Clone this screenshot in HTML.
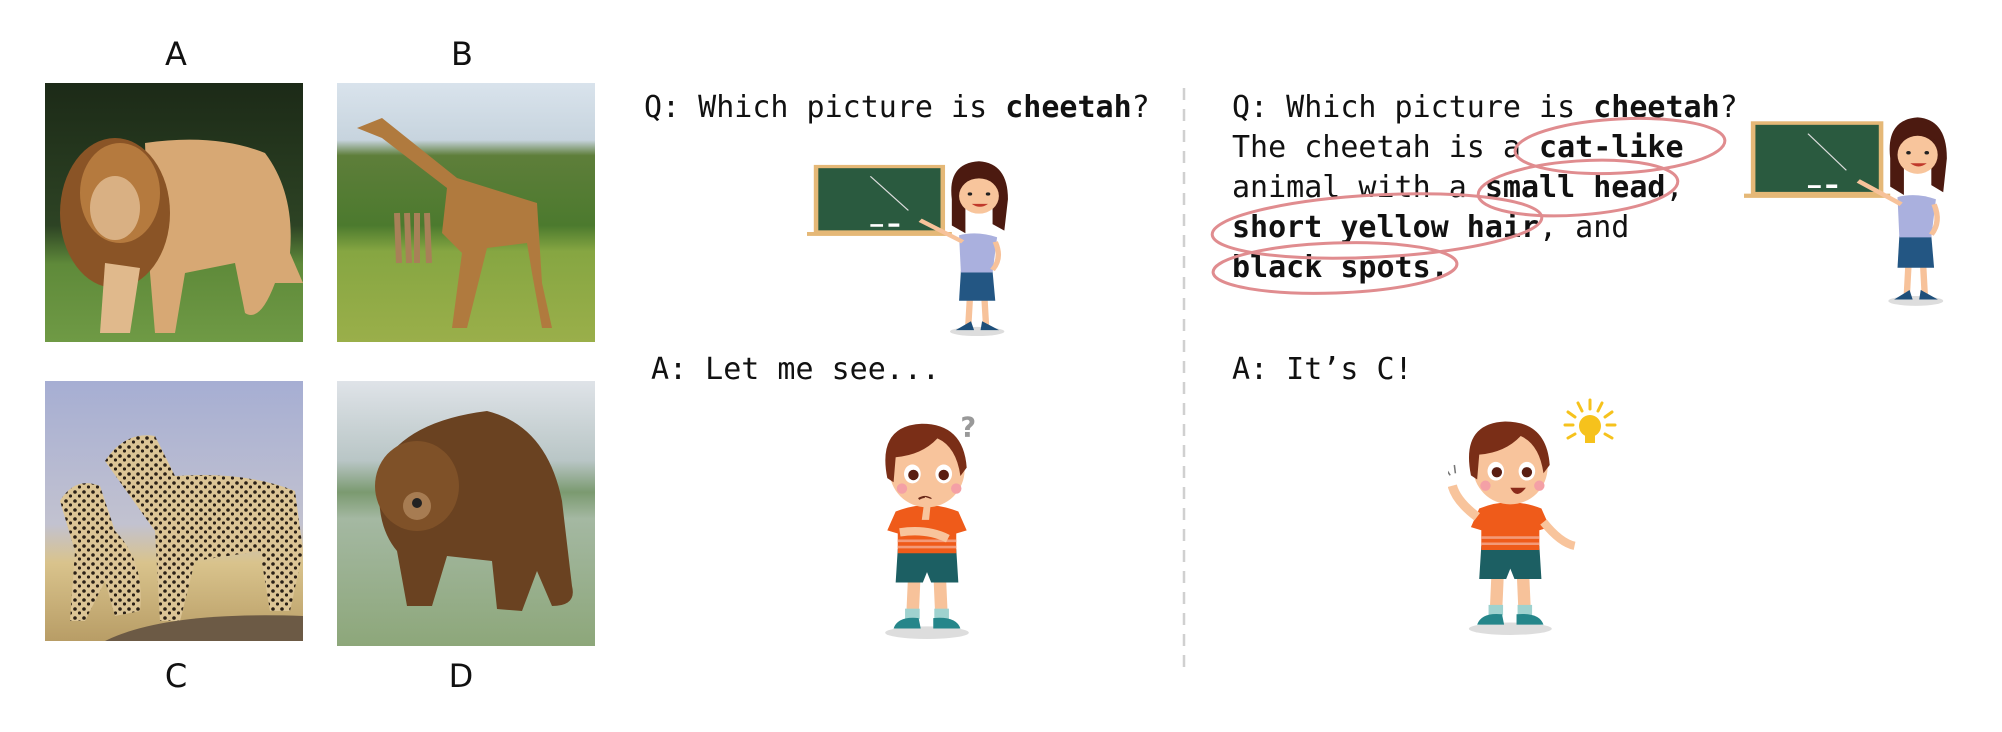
<!DOCTYPE html>
<html><head><meta charset="utf-8"><style>
body{margin:0;width:2002px;height:732px;background:#fff;position:relative;overflow:hidden;font-family:"DejaVu Sans Mono","Liberation Mono",monospace;color:#111}
.lbl{position:absolute;font-family:"DejaVu Sans","Liberation Sans",sans-serif;font-size:32px;width:60px;text-align:center;transform:translateX(-30px);line-height:1}
.t{position:absolute;font-size:30px;line-height:40px;white-space:pre}
b{font-weight:bold}
svg{position:absolute}
</style></head><body>
<div class="lbl" style="left:176px;top:38px">A</div>
<div class="lbl" style="left:462px;top:38px">B</div>
<div class="lbl" style="left:176px;top:660px">C</div>
<div class="lbl" style="left:461px;top:660px">D</div>

<!-- Lion -->
<svg style="left:45px;top:83px" width="258" height="259" viewBox="0 0 258 259">
<defs><linearGradient id="lg" x1="0" y1="0" x2="0" y2="1"><stop offset="0" stop-color="#1c2a17"/><stop offset=".55" stop-color="#2d4324"/><stop offset=".7" stop-color="#5f8a3a"/><stop offset="1" stop-color="#6f9a45"/></linearGradient></defs>
<rect width="258" height="259" fill="url(#lg)"/>
<path d="M100 60 Q170 50 220 70 Q250 110 245 170 L258 200 L230 200 Q215 240 200 230 L190 180 L140 190 L130 250 L110 250 L105 190 Z" fill="#d7a874"/>
<ellipse cx="70" cy="130" rx="55" ry="75" fill="#8a5426"/>
<ellipse cx="75" cy="110" rx="40" ry="50" fill="#b57a3e"/>
<ellipse cx="70" cy="125" rx="25" ry="32" fill="#d9b083"/>
<path d="M60 180 L55 250 L85 250 L95 185Z" fill="#e0b98c"/>
</svg>
<!-- Giraffe -->
<svg style="left:337px;top:83px" width="258" height="259" viewBox="0 0 258 259">
<defs><linearGradient id="gg" x1="0" y1="0" x2="0" y2="1"><stop offset="0" stop-color="#d9e3ec"/><stop offset=".22" stop-color="#c7d4de"/><stop offset=".28" stop-color="#5e7e3a"/><stop offset=".55" stop-color="#4c7a2e"/><stop offset=".65" stop-color="#86a642"/><stop offset="1" stop-color="#9aaf4a"/></linearGradient></defs>
<rect width="258" height="259" fill="url(#gg)"/>
<path d="M20 45 L45 35 L120 95 L200 120 L205 200 L215 245 L205 245 L195 190 L190 160 L150 165 L130 245 L115 245 L125 170 L105 150 L110 105 L45 55 Z" fill="#b07a3e"/>
<path d="M60 130 L62 180 M70 130 L72 180 M80 130 L80 180 M90 130 L92 180" stroke="#a88058" stroke-width="6"/>
</svg>
<!-- Cheetah -->
<svg style="left:45px;top:381px" width="258" height="260" viewBox="0 0 258 260">
<defs><linearGradient id="cg" x1="0" y1="0" x2="0" y2="1"><stop offset="0" stop-color="#a6aed3"/><stop offset=".55" stop-color="#c2c2d0"/><stop offset=".7" stop-color="#d9c38c"/><stop offset="1" stop-color="#b89d66"/></linearGradient>
<pattern id="sp" width="9" height="9" patternUnits="userSpaceOnUse"><rect width="9" height="9" fill="#dcc596"/><circle cx="3" cy="3" r="1.8" fill="#2a2016"/><circle cx="7.5" cy="7" r="1.6" fill="#2a2016"/></pattern></defs>
<rect width="258" height="260" fill="url(#cg)"/>
<path d="M60 80 Q80 50 110 55 L130 95 Q200 90 250 110 L258 170 L245 230 L225 230 L215 170 L150 180 L135 240 L115 240 L110 150 Z" fill="url(#sp)"/>
<path d="M15 120 Q30 95 55 105 L70 150 Q100 180 95 230 L70 235 L60 200 L40 240 L25 240 L30 170 Z" fill="url(#sp)"/>
<path d="M60 260 Q120 230 258 235 L258 260Z" fill="#6c5a45"/>
</svg>
<!-- Bear -->
<svg style="left:337px;top:381px" width="258" height="265" viewBox="0 0 258 265">
<defs><linearGradient id="bg" x1="0" y1="0" x2="0" y2="1"><stop offset="0" stop-color="#dfe3e8"/><stop offset=".3" stop-color="#b9c6c6"/><stop offset=".42" stop-color="#7b9a70"/><stop offset=".52" stop-color="#a4b8a2"/><stop offset="1" stop-color="#8da77a"/></linearGradient></defs>
<rect width="258" height="265" fill="url(#bg)"/>
<path d="M45 85 Q70 40 150 30 Q210 45 225 120 L235 205 Q240 225 215 225 L200 190 L185 230 L160 228 L155 180 L110 175 L95 225 L70 225 L60 170 Q35 140 45 85Z" fill="#6a4221"/>
<ellipse cx="80" cy="105" rx="42" ry="45" fill="#7f5128"/>
<ellipse cx="80" cy="125" rx="14" ry="14" fill="#a77c52"/>
<circle cx="80" cy="122" r="5" fill="#222"/>
</svg>

<div class="t" style="left:644px;top:88px">Q: Which picture is <b>cheetah</b>?</div>
<div class="t" style="left:651px;top:350px">A: Let me see...</div>

<svg style="left:1182px;top:88px" width="4" height="584"><line x1="2" y1="0" x2="2" y2="584" stroke="#d0d0d0" stroke-width="2.5" stroke-dasharray="12 9"/></svg>

<div class="t" style="left:1232px;top:88px">Q: Which picture is <b>cheetah</b>?
The cheetah is a <b>cat-like</b>
animal with a <b>small head</b>,
<b>short yellow hair</b>, and
<b>black spots.</b></div>
<div class="t" style="left:1232px;top:350px">A: It’s C!</div>

<svg style="left:1200px;top:90px" width="560" height="220" viewBox="1200 90 560 220" fill="none" stroke="#e08c8f" stroke-width="3">
<ellipse cx="1620" cy="146" rx="105" ry="27" transform="rotate(-3 1620 146)"/>
<ellipse cx="1578" cy="188" rx="100" ry="27" transform="rotate(-4 1578 188)"/>
<ellipse cx="1377" cy="226" rx="165" ry="31" transform="rotate(-3 1377 226)"/>
<ellipse cx="1335" cy="268" rx="122" ry="25" transform="rotate(-2 1335 268)"/>
</svg>

<svg width="0" height="0" style="position:absolute"><defs>
<g id="teacher">
<rect x="10" y="10" width="140" height="100" fill="#2a5a3f" stroke="#e5b877" stroke-width="5"/>
<rect x="0" y="110" width="160" height="6" fill="#e5b877"/>
<rect x="70" y="98" width="14" height="4" fill="#fff"/><rect x="90" y="97" width="12" height="5" fill="#fff"/>
<line x1="70" y1="25" x2="112" y2="77" stroke="#ddd" stroke-width="1.5"/>
<ellipse cx="188" cy="262" rx="30" ry="7" fill="#ddd"/>
<path d="M180 210 L178 258 M196 210 L198 258" stroke="#f7c29a" stroke-width="7"/>
<path d="M170 258 L182 258 L180 250Z M195 250 L206 258 L194 258Z" fill="#1e4f7a" stroke="#1e4f7a" stroke-width="4"/>
<path d="M170 170 L205 170 L208 215 L168 215Z" fill="#235683"/>
<path d="M168 115 Q188 108 210 118 L205 172 L170 172Z" fill="#aab0de"/>
<path d="M172 125 L125 92" stroke="#f7c29a" stroke-width="6"/>
<path d="M208 125 Q216 150 205 168" stroke="#f7c29a" stroke-width="6" fill="none"/>
<path d="M160 60 Q155 5 190 2 Q222 5 222 60 L218 108 L205 98 L205 60 L175 60 L175 112 L160 100Z" fill="#4c1a10"/>
<ellipse cx="190" cy="55" rx="22" ry="27" fill="#f8c59c"/>
<path d="M168 45 Q180 15 210 35 Q200 22 190 22 Q170 25 168 45Z" fill="#4c1a10"/>
<circle cx="180" cy="52" r="2.5" fill="#222"/><circle cx="200" cy="52" r="2.5" fill="#222"/>
<path d="M182 67 Q191 76 200 67Z" fill="#c0392b"/>
</g>
<g id="boy">
<ellipse cx="60" cy="208" rx="40" ry="6" fill="#ddd"/>
<path d="M48 150 L46 195 M72 150 L74 195" stroke="#f7c29a" stroke-width="12"/>
<rect x="39" y="185" width="14" height="10" fill="#9fd2cf"/><rect x="67" y="185" width="14" height="10" fill="#9fd2cf"/>
<path d="M28 204 Q32 192 52 194 L54 204Z M66 194 Q88 192 92 204 L66 204Z" fill="#25868a"/>
<path d="M32 128 L88 128 L90 160 L64 160 L60 150 L56 160 L30 160Z" fill="#1c5f63"/>
<path d="M30 92 Q60 80 90 92 L98 110 L88 113 L88 132 L32 132 L32 113 L22 110Z" fill="#ef5b1a"/>
<path d="M32 120 L88 120 M32 126 L88 126" stroke="#f39a78" stroke-width="2.5"/>
<circle cx="60" cy="52" r="36" fill="#f8c49c"/>
<path d="M22 60 Q12 10 55 8 Q95 8 98 50 L92 58 Q88 30 70 22 Q55 38 30 40 L28 64Z" fill="#7a2e17"/>
<ellipse cx="46" cy="56" rx="8" ry="9" fill="#fff"/><ellipse cx="76" cy="56" rx="8" ry="9" fill="#fff"/>
<circle cx="47" cy="57" r="5" fill="#5a1e12"/><circle cx="76" cy="57" r="5" fill="#5a1e12"/>
<circle cx="36" cy="70" r="5" fill="#f4a0a6"/><circle cx="88" cy="70" r="5" fill="#f4a0a6"/>
</g>
</defs></svg>

<svg style="left:807px;top:160px" width="210" height="178" viewBox="0 0 232 272" preserveAspectRatio="none"><use href="#teacher"/></svg>
<svg style="left:1744px;top:116px" width="212" height="192" viewBox="0 0 232 272" preserveAspectRatio="none"><use href="#teacher"/></svg>

<svg style="left:862px;top:405px" width="130" height="235" viewBox="0 -10 120 225">
<use href="#boy"/>
<path d="M52 80 Q58 76 64 80" stroke="#6b2a1a" stroke-width="2" fill="none"/>
<path d="M55 100 L58 78 L64 80 L62 100 Z" fill="#f8c49c"/>
<path d="M34 112 Q60 108 80 118" stroke="#f8c49c" stroke-width="8" fill="none"/>
<text x="92" y="20" font-family="DejaVu Sans" font-weight="bold" font-size="26" fill="#999">?</text>
</svg>

<svg style="left:1448px;top:408px" width="135" height="228" viewBox="0 -5 130 220">
<use href="#boy"/>
<path d="M60 72 Q66 84 75 72Z" fill="#8a2a1a"/>
<path d="M28 100 Q8 85 4 70" stroke="#f8c49c" stroke-width="9" fill="none"/>
<path d="M92 105 Q108 125 122 128" stroke="#f8c49c" stroke-width="8" fill="none"/>
<path d="M-2 54 L2 60 M6 50 L7 58 M-8 60 L-2 62" stroke="#777" stroke-width="1.5"/>
</svg>
<svg style="left:1560px;top:398px" width="60" height="60" viewBox="0 0 60 60">
<g stroke="#f6c21c" stroke-width="3" stroke-linecap="round">
<line x1="30" y1="2" x2="30" y2="11"/><line x1="18" y1="5" x2="22" y2="13"/><line x1="42" y1="5" x2="38" y2="13"/>
<line x1="8" y1="14" x2="15" y2="19"/><line x1="52" y1="14" x2="45" y2="19"/>
<line x1="5" y1="27" x2="13" y2="27"/><line x1="55" y1="27" x2="47" y2="27"/>
<line x1="8" y1="40" x2="15" y2="36"/><line x1="52" y1="40" x2="45" y2="36"/></g>
<circle cx="30" cy="28" r="11" fill="#f6c21c"/><rect x="25" y="37" width="10" height="8" fill="#f6c21c"/>
</svg>
</body></html>
